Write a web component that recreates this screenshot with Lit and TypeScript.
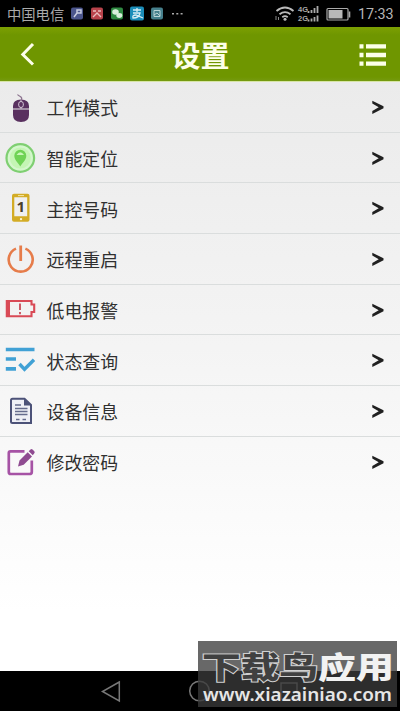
import { LitElement, html, css, svg } from "lit";
import { customElement } from "lit/decorators.js";

const mouse = svg`
  <path d="M17.500 9C19 5 15 6 13.500 3.500" fill="none" stroke="#8d7590" stroke-width="1.200"/>
  <path d="M9 17.500V15Q9 8.500 17 8.500T25 15V17.500ZM9 18.500H25V24Q25 31 17 31T9 24Z" fill="#59305f"/>
  <path d="M17 8.500V18" stroke="#c9b6cc" stroke-width="1"/>
  <rect x="14.700" y="10.500" width="4.600" height="6" rx="2.300" fill="#59305f" stroke="#d6c8d8"/>`;
const locate = svg`
  <circle cx="16.300" cy="16" r="13.800" fill="#d4f7cc" stroke="#7fcf72" stroke-width="2.200"/>
  <circle cx="16.300" cy="16" r="10.500" fill="#c4f5b4"/>
  <path d="M16.300 24.500C14.500 21 10.300 18 10.300 13.700a6 6 0 0 1 12 0C22.300 18 18.100 21 16.300 24.500Z" fill="#6fd355"/>
  <path d="M12.500 13Q16.300 7.500 20.100 13Z" fill="#c9f6b9"/>`;
const phone = svg`
  <g transform="translate(0 .8)">
  <path fill-rule="evenodd" d="M10 1H23.500Q25.500 1 25.500 3V27Q25.500 29 23.500 29H10Q8 29 8 27V3Q8 1 10 1ZM10.300 4.500V23.500H23.200V4.500Z" fill="#d3ac25"/>
  <path d="M14 2.800H20" stroke="#f4e6a8"/><circle cx="17" cy="26.300" r="1.200" fill="#fff6cf"/>
  <text x="16.800" y="19.500" text-anchor="middle" font-size="15" font-weight="700" font-family="Noto Sans, sans-serif" fill="#4a4029">1</text>
  </g>`;
const power = svg`
  <path d="M12 5.600A12 12 0 1 0 21.400 5.600" fill="none" stroke="#e67c4a" stroke-width="2.600"/>
  <path d="M16.700 2.500V18" stroke="#e67c4a" stroke-width="2.800"/>`;
const battery = svg`
  <path d="M2.800 7H27.500V10.500H30.200V18H27.500V22.200H2.800Z" fill="none" stroke="#d94a56" stroke-width="2.100"/>
  <path d="M2 7H6V22H2Z" fill="#d94a56"/>
  <path d="M16 9.500V16M16 18V20.200" stroke="#c94c58" stroke-width="1.800"/>`;
const status = svg`
  <path d="M1.800 5.500H30.500M1.800 15H12M1.800 24.800H12" stroke="#41a1d5" stroke-width="3.700"/>
  <path d="M15.500 20L20.500 25.300L30 15.800" fill="none" stroke="#41a1d5" stroke-width="3.400"/>`;
const doc = svg`
  <path d="M8.500 3.700H20.500L27 10V28H8.500Q7 28 7 26.500V5.200Q7 3.700 8.500 3.700Z" fill="#eff0f6" stroke="#4c5278" stroke-width="2"/>
  <path d="M20 4V10.500H27Z" fill="#4c5278"/>
  <path d="M11 10H17M11 13.500H23.500M11 16.500H23.500M11 19.500H23.500M12 24.500H15.500M18.500 24.500H22" stroke="#656b8d" stroke-width="1.300"/>`;
const edit = svg`
  <path d="M20.500 5.300H6.500Q4.800 5.300 4.800 7V26Q4.800 28 6.800 28H25.500Q27.800 28 27.800 26V14.500" fill="none" stroke="#a653a5" stroke-width="2.700"/>
  <path d="M14 20.500L15.500 14.500L23.700 6.300L28 10.500L19.700 18.700ZM24.700 5.300L26.500 3.500Q27.500 2.700 28.500 3.500L30.300 5.300Q31.200 6.300 30.300 7.300L28.800 9.300Z" fill="#8f4b91"/>`;

const rows = [
  { label: "工作模式", icon: mouse },
  { label: "智能定位", icon: locate },
  { label: "主控号码", icon: phone },
  { label: "远程重启", icon: power },
  { label: "低电报警", icon: battery },
  { label: "状态查询", icon: status },
  { label: "设备信息", icon: doc },
  { label: "修改密码", icon: edit },
];

@customElement("app-root")
export class AppRoot extends LitElement {
  static styles = css`
    :host {
      display: flex;
      flex-direction: column;
      position: relative;
      width: 400px;
      height: 711px;
      overflow: hidden;
      font-family: "Noto Sans CJK SC", sans-serif;
      background: #fff;
    }
    svg { display: block; flex: none; }
    .status {
      height: 27px;
      flex: none;
      box-sizing: border-box;
      padding: 0 7px;
      display: flex;
      align-items: center;
      background: #000;
      color: #aaa;
      font-size: 14.3px;
      line-height: 27px;
    }
    .apps { margin-left: 6px; }
    .signals { margin-left: auto; }
    .clock {
      width: 35px;
      margin-left: 6px;
      padding-top: 2px;
      font-family: Roboto, sans-serif;
      font-size: 14.3px;
      color: #b5b5b5;
      white-space: nowrap;
    }
    .header {
      height: 55px;
      flex: none;
      box-sizing: border-box;
      border-bottom: 1px solid #d7e5a7;
      padding: 0 13px 0 19px;
      display: grid;
      grid-template-columns: 28px 1fr 28px;
      align-items: center;
      background: linear-gradient(#7ca002, #6f9600 8px, #6f9600 50px, #759a10);
      color: #fdffe9;
    }
    .title {
      text-align: center;
      font-size: 29px;
      font-weight: 700;
      line-height: 53px;
      padding: 0 5px 0 0;
    }
    .list {
      flex: 1;
      background: linear-gradient(#ebebeb, #f4f4f4 45%, #fff 90%);
    }
    .row {
      height: 50.7px;
      box-sizing: border-box;
      border-bottom: 1px solid #dadddd;
      padding: 0 16px 0 4px;
      display: flex;
      align-items: center;
      font-size: 17.9px;
      font-weight: 400;
      color: #303030;
    }
    .row:last-child { border-bottom-color: transparent; }
    .label { flex: 1; margin-left: 10.500px; padding-top: 1px; line-height: 26px; }
    .nav {
      height: 40px;
      flex: none;
      background: #000;
    }
    .mark {
      position: absolute;
      left: 198px;
      top: 641px;
      width: 199px;
      height: 66px;
      background: rgba(58, 58, 58, 0.77);
    }
  `;

  render() {
    return html`
      <div class="status">
        <span>中国电信</span>
        <svg class="apps" width="116" height="18" viewBox="0 0 116 18">
          <rect x="1" y="2.500" width="12" height="12" rx="2" fill="#4b558c"/>
          <path d="M4 12L7 8V5H11V8H7" fill="none" stroke="#c8cce0" stroke-width="1.500"/>
          <rect x="21" y="2.500" width="12" height="12" rx="2" fill="#b8434b"/>
          <path d="M23 6H26M28 6H31M23 12L27 8L31 12" fill="none" stroke="#e8bcbc" stroke-width="1.400"/>
          <rect x="41" y="2.500" width="12" height="12" rx="2" fill="#2f8a42"/>
          <ellipse cx="45.500" cy="7" rx="3.300" ry="2.700" fill="#d9eedc"/>
          <ellipse cx="49.300" cy="10.500" rx="3" ry="2.400" fill="#d9eedc"/>
          <rect x="60" y="1.500" width="14" height="14" rx="2" fill="#1b8db9"/>
          <path d="M63 5H71M67 3V7M63 8H70Q69 13 63 13Q62 10 66 10L73 13" fill="none" stroke="#d6edf5" stroke-width="1.300"/>
          <rect x="81" y="2.500" width="12" height="12" rx="2" fill="#46808c"/>
          <path d="M84 5.500H90V11.500H84ZM84 10L87 8L90 11" fill="none" stroke="#b9d3d6"/>
          <path d="M102 8.700h2M106.300 8.700h2M110.600 8.700h2" stroke="#aaa" stroke-width="1.500"/>
        </svg>
        <svg class="signals" width="78" height="20" viewBox="0 0 78 20">
          <g fill="none" stroke="#bbb" stroke-width="1.800">
            <path d="M2.500 7Q11 0 19.500 7M5.500 10.300Q11 6 16.500 10.300M8.300 13.200Q11 11 13.700 13.200"/>
          </g>
          <circle cx="11" cy="15.300" r="1.500" fill="#bbb"/>
          <path d="M2 12V16M4.500 13V16" stroke="#888"/>
          <g font-family="Liberation Sans, sans-serif" font-size="7.500" font-weight="700" fill="#aaa">
            <text x="24" y="7.700">4G</text><text x="24" y="16.500">2G</text>
          </g>
          <path d="M34.500 9V7M37.500 9V6M40.500 9V4M43.500 9V2M34.500 17.500V15.500M37.500 17.500V14.500M40.500 17.500V13M43.500 17.500V11.500" stroke="#aaa" stroke-width="1.800"/>
          <rect x="53" y="4.500" width="21" height="11.500" rx="1" fill="none" stroke="#aaa" stroke-width="1.200"/>
          <path d="M54.500 6H68.500V14.500H54.500Z" fill="#b8b8b8"/><path d="M75.500 7.500V13.500" stroke="#aaa" stroke-width="1.600"/>
        </svg>
        <span class="clock">17:33</span>
      </div>
      <div class="header">
        <svg width="28" height="28" viewBox="0 0 28 28">
          <path d="M14 4L3.800 14.500L14 24.500" fill="none" stroke="#fdffe9" stroke-width="3"/>
        </svg>
        <div class="title">设置</div>
        <svg width="28" height="28" viewBox="0 0 28 28">
          <path d="M.500 6.300H4.500M7 6.300H27M.500 15H4.500M7 15H27M.500 23.700H4.500M7 23.700H27" stroke="#fdffe9" stroke-width="4.300"/>
        </svg>
      </div>
      <div class="list">
        ${rows.map(
          (row) => html`<div class="row">
            <svg width="32" height="32" viewBox="0 0 32 32">${row.icon}</svg>
            <span class="label">${row.label}</span>
            <svg width="13" height="16" viewBox="0 0 13 16">
              <path d="M1.300 1.700L12.500 7.300V9.300L1.300 14.900V12L7.700 8.300L1.300 4.600Z" fill="#202020"/>
            </svg>
          </div>`
        )}
      </div>
      <div class="nav">
        <svg width="400" height="40" viewBox="0 0 400 40">
          <g fill="none" stroke="#777" stroke-width="1.500">
            <path d="M119.300 11L102.500 20.500L119.300 30Z"/>
            <circle cx="199.500" cy="20" r="9.800"/>
            <rect x="281" y="12" width="16" height="16"/>
          </g>
        </svg>
      </div>
      <div class="mark">
        <svg width="199" height="66" viewBox="0 0 199 66">
          <g font-family="Noto Sans CJK SC, sans-serif" font-weight="900" font-size="30">
            <text x="4" y="37.300" textLength="116" lengthAdjust="spacingAndGlyphs" fill="#404040" stroke="#d0d0d0" stroke-width="2" paint-order="stroke">下载鸟</text>
            <text x="120" y="37.300" textLength="76" lengthAdjust="spacingAndGlyphs" fill="#f2f2f2">应用</text>
          </g>
          <text x="5" y="60" textLength="189" lengthAdjust="spacingAndGlyphs" font-family="Noto Sans, sans-serif" font-weight="600" font-size="17" fill="#e6e6e6">www.xiazainiao.com</text>
        </svg>
      </div>
    `;
  }
}
